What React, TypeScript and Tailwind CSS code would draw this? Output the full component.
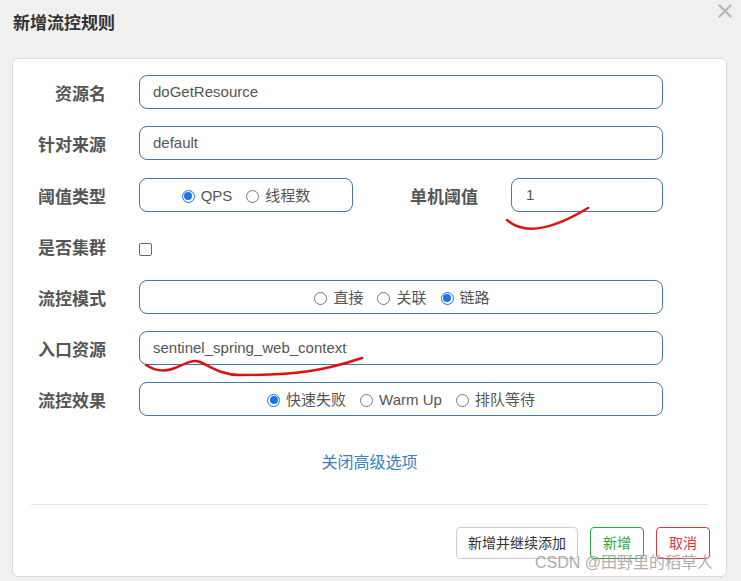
import React from 'react'

const FONT = { fontFamily: '"Liberation Sans", "Noto Sans CJK SC", sans-serif' }

function Radio({ checked, label }: { checked?: boolean; label: string }) {
  return (
    <span className="inline-flex items-center gap-[6px]">
      {checked ? (
        <span className="w-[13px] h-[13px] rounded-full border border-[#1a73e8] bg-white flex items-center justify-center">
          <span className="w-[8px] h-[8px] rounded-full bg-[#1a73e8]" />
        </span>
      ) : (
        <span className="w-[13px] h-[13px] rounded-full border border-[#777] bg-white" />
      )}
      <span className="text-[15px] text-[#555]">{label}</span>
    </span>
  )
}

function Label({ children, className = 'w-[93px]' }: { children: React.ReactNode; className?: string }) {
  return <div className={`${className} shrink-0 pt-[5px] text-right text-[17px] font-bold text-[#555]`}>{children}</div>
}

const box = 'h-[34px] rounded-[8px] border border-[#4577a8] bg-white flex items-center'

export default function App() {
  return (
    <div className="relative w-[741px] h-[581px] bg-[#f0f0f0] overflow-hidden" style={FONT}>
      {/* header */}
      <div className="h-[58px] px-[13px] pt-[12px]">
        <span className="text-[17px] leading-[22px] font-bold text-[#333]">新增流控规则</span>
      </div>
      <button className="absolute left-[718px] top-[4px] w-[14px] h-[14px]" aria-label="关闭">
        <svg width="14" height="14" viewBox="0 0 14 14">
          <path d="M1.5 1.5 L12.5 12.5 M12.5 1.5 L1.5 12.5" stroke="#b8b8b8" strokeWidth="2.4" strokeLinecap="round" />
        </svg>
      </button>

      {/* panel */}
      <div className="ml-[12px] w-[715px] h-[519px] rounded-[6px] border border-[#dcdcdc] bg-white pt-[16px]">
        <div className="flex flex-col gap-[17px]">
          <div className="flex items-center">
            <Label>资源名</Label>
            <div className={`${box} ml-[33px] w-[524px] px-[13px] text-[15px] text-[#555]`}>doGetResource</div>
          </div>
          <div className="flex items-center">
            <Label>针对来源</Label>
            <div className={`${box} ml-[33px] w-[524px] px-[13px] text-[15px] text-[#555]`}>default</div>
          </div>
          <div className="mt-[1px] flex items-center">
            <Label>阈值类型</Label>
            <div className={`${box} ml-[33px] w-[214px] justify-center gap-[14px] pt-[2px]`}>
              <Radio checked label="QPS" />
              <Radio label="线程数" />
            </div>
            <Label className="w-[125px]">单机阈值</Label>
            <div className={`${box} ml-[33px] w-[152px] px-[14px] text-[15px] text-[#555]`}>1</div>
          </div>
          <div className="flex items-center h-[34px]">
            <Label>是否集群</Label>
            <span className="ml-[33px] mt-[6px] w-[13px] h-[13px] rounded-[2px] border border-[#666] bg-white" />
          </div>
          <div className="flex items-center">
            <Label>流控模式</Label>
            <div className={`${box} ml-[33px] w-[524px] justify-center gap-[14px] pl-[2px] pt-[2px]`}>
              <Radio label="直接" />
              <Radio label="关联" />
              <Radio checked label="链路" />
            </div>
          </div>
          <div className="flex items-center">
            <Label>入口资源</Label>
            <div className={`${box} ml-[33px] w-[524px] px-[13px] text-[15px] text-[#555]`}>sentinel_spring_web_context</div>
          </div>
          <div className="flex items-center">
            <Label>流控效果</Label>
            <div className={`${box} ml-[33px] w-[524px] justify-center gap-[14px] pt-[2px]`}>
              <Radio checked label="快速失败" />
              <Radio label="Warm Up" />
              <Radio label="排队等待" />
            </div>
          </div>
        </div>

        <div className="mt-[35px] h-[24px] text-center text-[16px] leading-[24px] text-[#3a80c2]">关闭高级选项</div>

        <div className="mt-[29px] mx-[18px] border-t border-[#e2e2e2]" />

        <div className="mt-[22px] flex justify-end gap-[12px] pr-[16px]">
          <button className="h-[32px] px-[11px] rounded-[4px] border border-[#ccc] bg-white text-[14px] text-[#333]">新增并继续添加</button>
          <button className="h-[32px] px-[12px] rounded-[4px] border border-[#28a745] bg-white text-[14px] text-[#28a745]">新增</button>
          <button className="h-[32px] px-[12px] rounded-[4px] border border-[#dc3545] bg-white text-[14px] text-[#dc3545]">取消</button>
        </div>
      </div>

      {/* watermark */}
      <span className="absolute left-[535px] top-[552px] text-[16px] leading-[22px] text-[#9a9a9a] opacity-80 whitespace-nowrap">
        CSDN @田野里的稻草人
      </span>

      {/* red pen marks */}
      <svg className="absolute inset-0 pointer-events-none" width="741" height="581">
        <path d="M507 220 Q532 242 588 208" fill="none" stroke="#e01010" strokeWidth="2.5" strokeLinecap="round" />
        <path
          d="M146 365 C155 371 165 372 175 368 S192 359 200 362 S220 375 240 375 S290 374 310 371 S350 362 362 358"
          fill="none"
          stroke="#e01010"
          strokeWidth="2.5"
          strokeLinecap="round"
        />
      </svg>
    </div>
  )
}
